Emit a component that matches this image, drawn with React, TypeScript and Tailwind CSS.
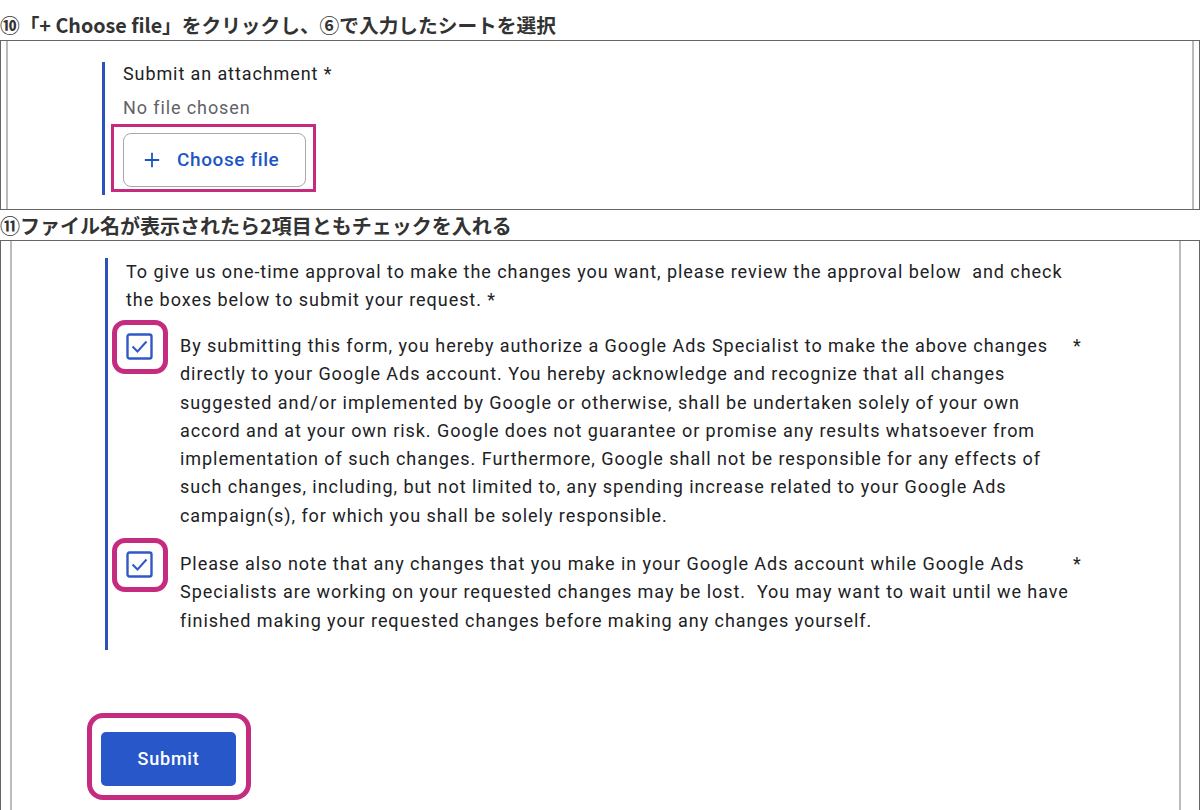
const Check = () => (
  <svg viewBox="0 0 27 27" className="w-[27px] h-[27px] block">
    <rect x="1.5" y="1.5" width="24" height="24" rx="2" fill="white" stroke="#2f5ac6" strokeWidth="2.4" />
    <path d="M6.5 13.5 L11.5 18.5 L20.5 8.5" fill="none" stroke="#2f5ac6" strokeWidth="2" />
  </svg>
);

const CheckRow = ({ children }: { children: React.ReactNode }) => (
  <div className="flex items-start">
    <div className="relative w-[54px] shrink-0 pt-[1px]">
      <Check />
      {/* magenta annotation */}
      <div className="absolute left-[-14px] top-[-12px] w-[56px] h-[54px] border-[5px] border-[#c52c80] rounded-[13px]" />
    </div>
    <p className="w-[890px] leading-[28.3px]">{children}</p>
    <span className="ml-[3px] leading-[28px]">*</span>
  </div>
);

export default function App() {
  return (
    <div className="w-[1200px] h-[810px] overflow-hidden bg-white text-[#202124]" style={{ fontFamily: "Roboto, 'Noto Sans CJK JP', sans-serif" }}>
      {/* step 10 */}
      <h2 className="pt-[12px] h-[40px] leading-[26px] text-[19.7px] font-bold text-[#333] whitespace-nowrap" style={{ fontFamily: "'Noto Sans CJK JP', sans-serif" }}>
        ⑩「+ Choose file」をクリックし、⑥で入力したシートを選択
      </h2>
      <div className="h-[170px] border border-[#666] px-[5px]">
        <div className="h-full border-l-2 border-r-2 border-[#bbb] pl-[94px] pt-[21px]">
          <div className="border-l-[3px] border-[#2d52be] pl-[18px] pb-[8px] tracking-[0.9px]">
            <div className="text-[18px] leading-[24px]">Submit an attachment *</div>
            <div className="mt-[10px] text-[18px] leading-[24px] text-[#5f6368]">No file chosen</div>
            <div className="relative mt-[13px] w-[183px]">
              <button className="w-[183px] h-[54px] border border-[#a8a8a8] rounded-[8px] flex items-center pl-[19px] gap-[16px] text-[#1d56c4] text-[19px] font-medium tracking-[0.6px]">
                <svg viewBox="0 0 20 20" className="w-[18px] h-[18px]">
                  <path d="M10 2 V18 M2 10 H18" stroke="#1d56c4" strokeWidth="2" />
                </svg>
                Choose file
              </button>
              <div className="absolute left-[-12px] top-[-9px] w-[205px] h-[68px] border-[3px] border-[#c52c80]" />
            </div>
          </div>
        </div>
      </div>

      {/* step 11 */}
      <h2 className="pt-[3px] h-[30px] leading-[26px] text-[20px] font-bold text-[#333] whitespace-nowrap" style={{ fontFamily: "'Noto Sans CJK JP', sans-serif" }}>
        ⑪ファイル名が表示されたら2項目ともチェックを入れる
      </h2>
      <div className="h-[570px] border-t border-l border-r border-[#666] pl-[9px] pr-[18px]">
        <div className="h-full border-l-2 border-r-2 border-[#bbb] pt-[17px] pl-[93px]">
          <div className="border-l-[3px] border-[#2d52be] pl-[18px] pb-[15px] text-[18px] tracking-[0.95px]">
            <p className="leading-[28px] w-[960px]">
              To give us one-time approval to make the changes you want, please review the approval below &nbsp;and check the boxes below to submit your request. *
            </p>
            <div className="mt-[18px] flex flex-col gap-[20px]">
              <CheckRow>
                By submitting this form, you hereby authorize a Google Ads Specialist to make the above changes directly to your Google Ads account. You hereby acknowledge and recognize that all changes suggested and/or implemented by Google or otherwise, shall be undertaken solely of your own accord and at your own risk. Google does not guarantee or promise any results whatsoever from implementation of such changes. Furthermore, Google shall not be responsible for any effects of such changes, including, but not limited to, any spending increase related to your Google Ads campaign(s), for which you shall be solely responsible.
              </CheckRow>
              <CheckRow>
                Please also note that any changes that you make in your Google Ads account while Google Ads Specialists are working on your requested changes may be lost. &nbsp;You may want to wait until we have finished making your requested changes before making any changes yourself.
              </CheckRow>
            </div>
          </div>
          <div className="relative ml-[-4px] mt-[82px] w-[135px]">
            <button className="w-[135px] h-[54px] rounded-[5px] bg-[#2757c9] text-white text-[18px] font-medium tracking-[0.8px]">Submit</button>
            <div className="absolute left-[-14px] top-[-19px] w-[164px] h-[87px] border-[5px] border-[#c52c80] rounded-[16px]" />
          </div>
        </div>
      </div>
    </div>
  );
}
